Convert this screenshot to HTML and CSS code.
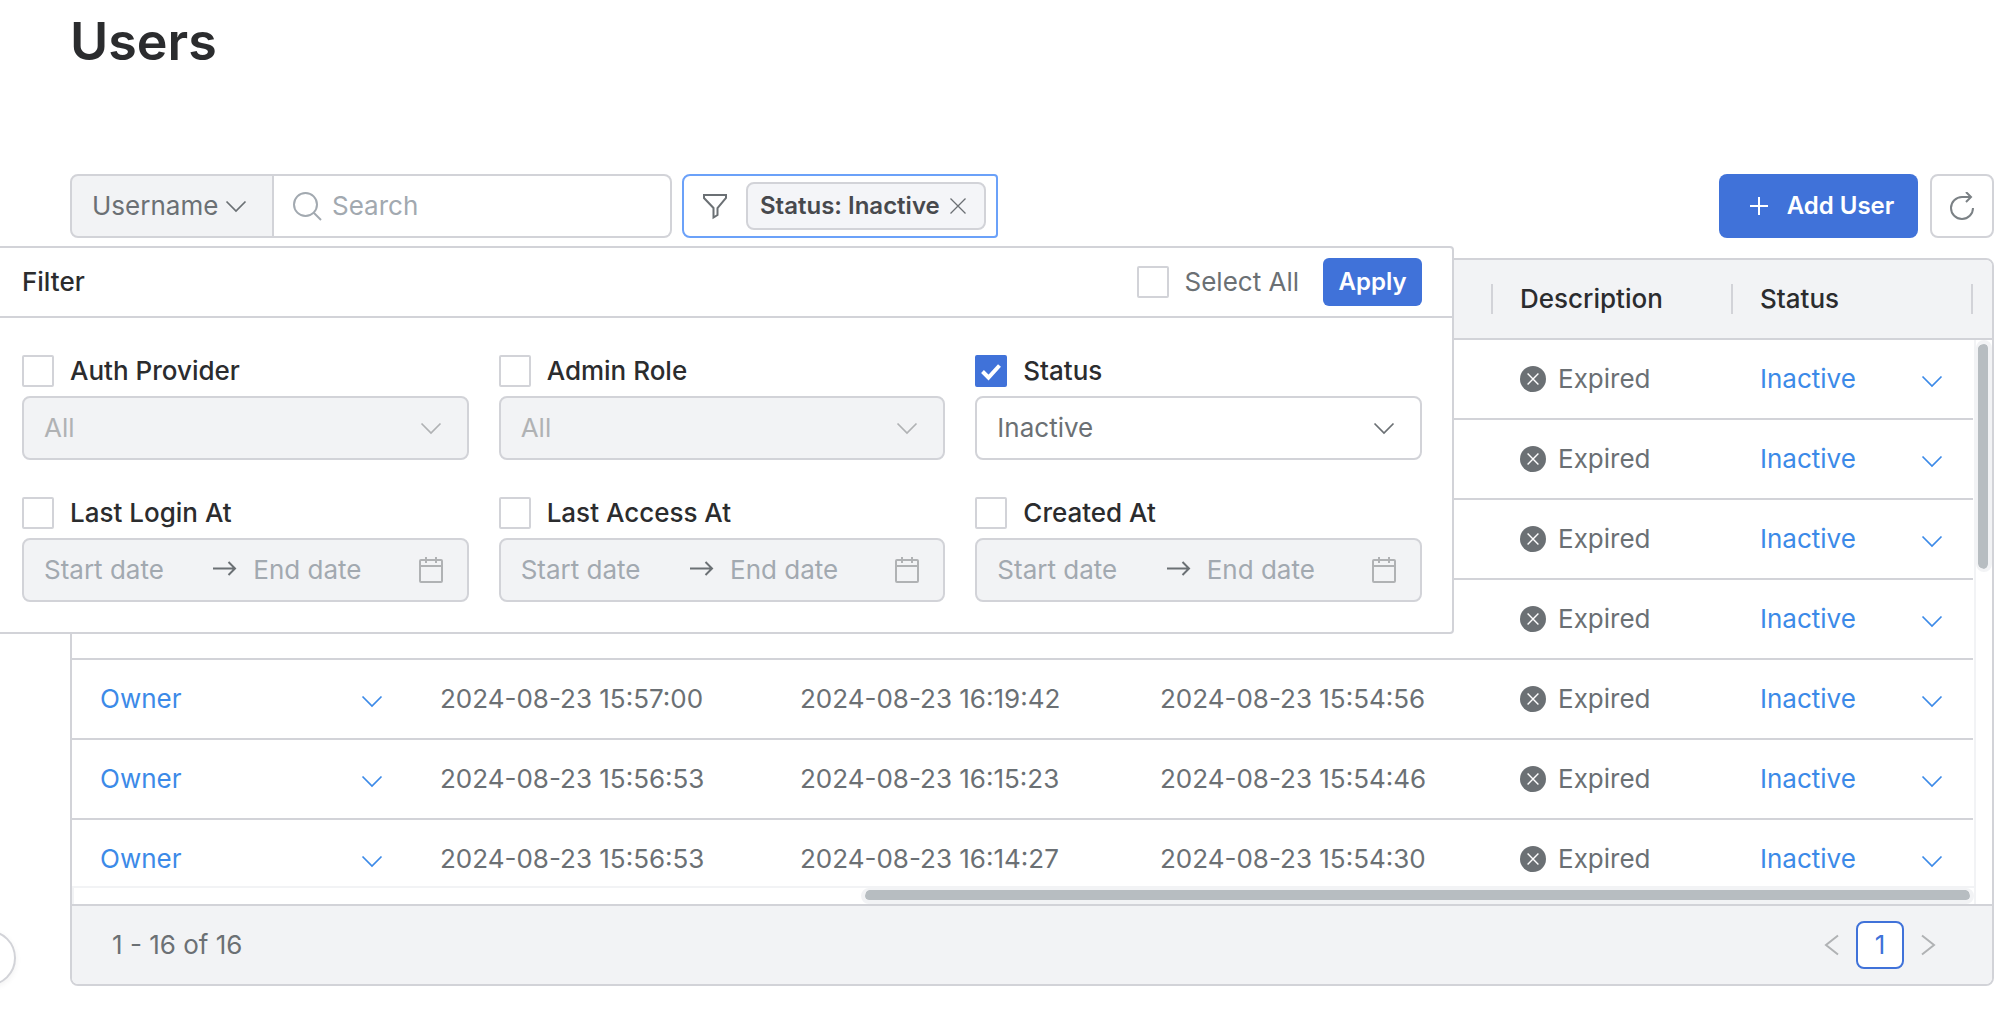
FILE: index.html
```html
<!DOCTYPE html>
<html lang="en">
<head>
<meta charset="utf-8">
<meta name="viewport" content="width=device-width, initial-scale=1">
<title>Users</title>
<link rel="stylesheet" href="styles.css">
</head>
<body>
<svg class="sprite" aria-hidden="true">
  <symbol id="chevron" viewBox="0 0 28 28"><path d="M4.500 9.500 14 19l9.500-9.500"/></symbol>
  <symbol id="arrow" viewBox="0 0 28 28"><path d="M2 12.500h22M17.500 6l6.500 6.500-6.500 6.500"/></symbol>
  <symbol id="calendar" viewBox="0 0 28 28"><rect x="3" y="4" width="22" height="22" rx="1"/><path d="M3 10h22M9 1v6M19 1v6"/></symbol>
  <symbol id="expired" viewBox="0 0 24 24"><circle class="disc" cx="12" cy="12" r="12"/><path class="cross" d="M7 7l10 10M17 7 7 17"/></symbol>
</svg>
<main class="page">
  <h1 class="title">Users</h1>
  <div class="toolbar">
    <div class="search">
      <div class="select select-key">
        <select aria-label="Search by"><option>Username</option></select>
        <svg class="icon icon-chevron"><use href="#chevron"/></svg>
      </div>
      <label class="search-box">
        <svg class="icon icon-search" viewBox="0 0 30 30"><circle cx="13.500" cy="13.500" r="11.500"/><path d="M21.500 21.500 29 29"/></svg>
        <input type="search" placeholder="Search" aria-label="Search">
      </label>
    </div>
    <div class="filter-bar">
      <button class="bare" type="button" aria-label="Open filter"><svg class="icon" viewBox="0 0 28 28"><path d="M3 3h22v3l-8.500 10v7l-4 2.500V16L3 6z"/></svg></button>
      <span class="tag">Status: Inactive
        <button class="bare" type="button" aria-label="Remove filter"><svg class="icon icon-close" viewBox="0 0 20 20"><path d="M2.500 2.500l15 15M17.500 2.500l-15 15"/></svg></button>
      </span>
    </div>
    <button class="btn btn-add" type="button"><svg class="icon icon-plus" viewBox="0 0 20 20"><path d="M10 1v18M1 10h18"/></svg>Add User</button>
    <button class="btn-refresh" type="button" aria-label="Refresh"><svg class="icon" viewBox="0 0 28 28"><path d="M25 16A11 11 0 1 1 14 5h9M18 0l5 5-5 5"/></svg></button>

    <form class="panel">
      <div class="panel-head">
        <h2>Filter</h2>
        <label class="check check-all"><input type="checkbox">Select All</label>
        <button class="btn btn-apply" type="button">Apply</button>
      </div>
      <div class="panel-grid">
        <div class="field">
          <label class="check"><input type="checkbox">Auth Provider</label>
          <div class="select is-disabled"><select disabled aria-label="Auth Provider"><option>All</option></select><svg class="icon icon-chevron"><use href="#chevron"/></svg></div>
        </div>
        <div class="field">
          <label class="check"><input type="checkbox">Admin Role</label>
          <div class="select is-disabled"><select disabled aria-label="Admin Role"><option>All</option></select><svg class="icon icon-chevron"><use href="#chevron"/></svg></div>
        </div>
        <div class="field">
          <label class="check"><input type="checkbox" checked>Status</label>
          <div class="select"><select aria-label="Status"><option>Inactive</option></select><svg class="icon icon-chevron"><use href="#chevron"/></svg></div>
        </div>
        <div class="field">
          <label class="check"><input type="checkbox">Last Login At</label>
          <div class="range"><input type="text" disabled placeholder="Start date" aria-label="Last login start date"><svg class="icon icon-arrow"><use href="#arrow"/></svg><input type="text" disabled placeholder="End date" aria-label="Last login end date"><svg class="icon"><use href="#calendar"/></svg></div>
        </div>
        <div class="field">
          <label class="check"><input type="checkbox">Last Access At</label>
          <div class="range"><input type="text" disabled placeholder="Start date" aria-label="Last access start date"><svg class="icon icon-arrow"><use href="#arrow"/></svg><input type="text" disabled placeholder="End date" aria-label="Last access end date"><svg class="icon"><use href="#calendar"/></svg></div>
        </div>
        <div class="field">
          <label class="check"><input type="checkbox">Created At</label>
          <div class="range"><input type="text" disabled placeholder="Start date" aria-label="Created start date"><svg class="icon icon-arrow"><use href="#arrow"/></svg><input type="text" disabled placeholder="End date" aria-label="Created end date"><svg class="icon"><use href="#calendar"/></svg></div>
        </div>
      </div>
    </form>
  </div>

  <section class="card">
    <div class="viewport">
      <table class="users">
        <colgroup><col><col class="col-date"><col class="col-date"><col class="col-date"><col class="col-state"><col class="col-state"><col class="col-scroll"></colgroup>
        <thead>
          <tr><th></th><th></th><th></th><th></th><th>Description</th><th>Status</th><td></td></tr>
        </thead>
        <tbody>
          <tr><td></td><td></td><td></td><td></td><td><span class="state"><svg class="icon"><use href="#expired"/></svg>Expired</span></td><td><div class="cell-select"><select aria-label="User status"><option>Inactive</option></select><svg class="icon icon-chevron"><use href="#chevron"/></svg></div></td><td></td></tr>
          <tr><td></td><td></td><td></td><td></td><td><span class="state"><svg class="icon"><use href="#expired"/></svg>Expired</span></td><td><div class="cell-select"><select aria-label="User status"><option>Inactive</option></select><svg class="icon icon-chevron"><use href="#chevron"/></svg></div></td><td></td></tr>
          <tr><td></td><td></td><td></td><td></td><td><span class="state"><svg class="icon"><use href="#expired"/></svg>Expired</span></td><td><div class="cell-select"><select aria-label="User status"><option>Inactive</option></select><svg class="icon icon-chevron"><use href="#chevron"/></svg></div></td><td></td></tr>
          <tr><td></td><td></td><td></td><td></td><td><span class="state"><svg class="icon"><use href="#expired"/></svg>Expired</span></td><td><div class="cell-select"><select aria-label="User status"><option>Inactive</option></select><svg class="icon icon-chevron"><use href="#chevron"/></svg></div></td><td></td></tr>
          <tr><td><div class="cell-select"><select aria-label="Admin role"><option>Owner</option></select><svg class="icon icon-chevron"><use href="#chevron"/></svg></div></td><td>2024-08-23 15:57:00</td><td>2024-08-23 16:19:42</td><td>2024-08-23 15:54:56</td><td><span class="state"><svg class="icon"><use href="#expired"/></svg>Expired</span></td><td><div class="cell-select"><select aria-label="User status"><option>Inactive</option></select><svg class="icon icon-chevron"><use href="#chevron"/></svg></div></td><td></td></tr>
          <tr><td><div class="cell-select"><select aria-label="Admin role"><option>Owner</option></select><svg class="icon icon-chevron"><use href="#chevron"/></svg></div></td><td>2024-08-23 15:56:53</td><td>2024-08-23 16:15:23</td><td>2024-08-23 15:54:46</td><td><span class="state"><svg class="icon"><use href="#expired"/></svg>Expired</span></td><td><div class="cell-select"><select aria-label="User status"><option>Inactive</option></select><svg class="icon icon-chevron"><use href="#chevron"/></svg></div></td><td></td></tr>
          <tr><td><div class="cell-select"><select aria-label="Admin role"><option>Owner</option></select><svg class="icon icon-chevron"><use href="#chevron"/></svg></div></td><td>2024-08-23 15:56:53</td><td>2024-08-23 16:14:27</td><td>2024-08-23 15:54:30</td><td><span class="state"><svg class="icon"><use href="#expired"/></svg>Expired</span></td><td><div class="cell-select"><select aria-label="User status"><option>Inactive</option></select><svg class="icon icon-chevron"><use href="#chevron"/></svg></div></td><td></td></tr>
        </tbody>
      </table>
      <div class="scroll scroll-y"><div class="thumb"></div></div>
      <div class="scroll scroll-x"><div class="thumb"></div></div>
    </div>
    <footer class="card-foot">
      <span>1 - 16 of 16</span>
      <nav class="pager" aria-label="Pages">
        <button class="bare" type="button" disabled aria-label="Previous page"><svg class="icon" viewBox="0 0 28 28"><path d="M20 4.500 8 14l12 9.500"/></svg></button>
        <button class="page-no" type="button" aria-current="page">1</button>
        <button class="bare" type="button" disabled aria-label="Next page"><svg class="icon" viewBox="0 0 28 28"><path d="M8 4.500 20 14 8 23.500"/></svg></button>
      </nav>
    </footer>
  </section>
</main>
<button class="sider-toggle" type="button" aria-label="Toggle sidebar"></button>
</body>
</html>
```
FILE: styles.css
```css
:root {
  --line: #d2d3d8;
  --soft: #f2f3f5;
  --text: #6b7074;
  --dark: #2b2c2e;
  --muted: #a2a9b0;
  --off: #b0b2b4;
  --blue: #4072d9;
  --link: #3c8ae8;
}
* { box-sizing: border-box; }
body {
  margin: 0;
  min-height: 100vh;
  overflow: hidden;
  background: #fff;
  color: var(--text);
  font: 400 26px/32px Inter, "Liberation Sans", sans-serif;
}
button, input, select {
  margin: 0;
  padding: 0;
  border: 0;
  background: none;
  color: inherit;
  font: inherit;
}
button, select { cursor: pointer; }
input { min-width: 0; outline: 0; }
select { appearance: none; opacity: 1; outline: 0; }
::placeholder { color: var(--muted); opacity: 1; }
.sprite { display: none; }
.icon {
  flex: none;
  display: block;
  width: 28px;
  height: 28px;
  fill: none;
  stroke: currentColor;
  stroke-width: 2;
}
.icon-chevron { stroke-width: 1.7; }
.bare { display: flex; }

.page { padding: 10px 22px 34px 70px; }
.title {
  margin: 0 0 100px;
  color: var(--dark);
  font-size: 52px;
  font-weight: 600;
  line-height: 64px;
}

/* Toolbar */
.toolbar { position: relative; display: flex; margin-bottom: 20px; }
.search { display: flex; width: 602px; }
.search-box {
  flex: 1;
  min-width: 0;
  display: flex;
  align-items: center;
  gap: 10px;
  height: 64px;
  padding: 0 18px;
  border: 2px solid var(--line);
  border-left: 0;
  border-radius: 0 8px 8px 0;
}
.search-box input { flex: 1; }
.icon-search { width: 30px; height: 30px; color: var(--muted); }
.filter-bar {
  display: flex;
  align-items: center;
  gap: 17px;
  height: 64px;
  margin-left: 10px;
  padding: 0 10px 0 17px;
  border: 2px solid #6ba1f9;
  border-radius: 8px 4px 4px 8px;
}
.tag {
  display: flex;
  align-items: center;
  gap: 8px;
  height: 48px;
  padding: 0 16px 0 12px;
  border: 2px solid var(--line);
  border-radius: 8px;
  background: #f4f5f8;
  color: #47494d;
  font-size: 24px;
  font-weight: 600;
  white-space: nowrap;
}
.icon-close { width: 20px; height: 20px; color: var(--text); stroke-width: 1.300; }
.btn {
  display: flex;
  align-items: center;
  justify-content: center;
  border-radius: 8px;
  background: var(--blue);
  color: #fff;
  font-size: 24px;
  font-weight: 600;
}
.btn-add { gap: 18px; width: 199px; height: 64px; margin-left: auto; padding-left: 6px; }
.icon-plus { width: 20px; height: 20px; }
.btn-refresh {
  display: grid;
  place-items: center;
  width: 64px;
  height: 64px;
  margin-left: 12px;
  border: 2px solid var(--line);
  border-radius: 8px;
  color: #7b8185;
}

/* Selects: the arrow shares the grid cell with the control */
.select, .cell-select { display: grid; align-items: center; }
.select > *, .cell-select > * { grid-area: 1 / 1; }
.select .icon, .cell-select .icon { justify-self: end; pointer-events: none; }
.select {
  height: 64px;
  border: 2px solid var(--line);
  border-radius: 8px;
  background: #fff;
}
.select select { width: 100%; height: 60px; padding: 0 20px; }
.select .icon { margin-right: 22px; }
.select-key { flex: none; width: 204px; border-radius: 8px 0 0 8px; background: var(--soft); }
.is-disabled { background: var(--soft); color: var(--off); }

/* Filter panel */
.panel {
  position: absolute;
  z-index: 2;
  top: 72px;
  left: -80px;
  width: 1464px;
  border: 2px solid var(--line);
  border-radius: 4px;
  background: #fff;
}
.panel-head {
  display: flex;
  align-items: center;
  gap: 24px;
  height: 70px;
  padding: 0 30px;
  border-bottom: 2px solid var(--line);
}
.panel-head h2 {
  flex: 1;
  margin: 0;
  color: var(--dark);
  font-size: 26px;
  font-weight: 500;
}
.btn-apply { width: 99px; height: 48px; border-radius: 6px; }
.panel-grid {
  display: grid;
  grid-template-columns: repeat(3, minmax(0, 1fr));
  gap: 36px 30px;
  padding: 36px 30px 30px;
}
.field { display: grid; grid-template-columns: minmax(0, 1fr); gap: 9px; }
.check {
  display: flex;
  align-items: center;
  gap: 16px;
  height: 33px;
  color: var(--dark);
  font-weight: 500;
}
.check-all { color: var(--text); font-weight: 400; }
.check input {
  appearance: none;
  width: 32px;
  height: 32px;
  border: 2px solid var(--line);
  border-radius: 2px;
  background: #fff;
}
.check input:checked {
  border-color: var(--blue);
  background: var(--blue) url("data:image/svg+xml,%3Csvg xmlns='http://www.w3.org/2000/svg' viewBox='0 0 28 28'%3E%3Cpath d='M5.500 14.500l6 6 11-12' fill='none' stroke='%23fff' stroke-width='4'/%3E%3C/svg%3E");
}
.range {
  display: flex;
  align-items: center;
  height: 64px;
  padding: 0 22px 0 20px;
  border: 2px solid var(--line);
  border-radius: 8px;
  background: var(--soft);
  color: var(--off);
}
.range input { flex: 1; }
.icon-arrow { margin: 0 14px 0 4px; color: var(--text); }

/* Table card */
.card {
  overflow: hidden;
  border: 2px solid var(--line);
  border-radius: 8px;
}
.viewport { position: relative; height: 644px; overflow: hidden; }
.users {
  width: 100%;
  table-layout: fixed;
  border-spacing: 0;
}
.col-date { width: 360px; }
.col-state { width: 240px; }
.col-scroll { width: 19px; }
.users th, .users td {
  height: 80px;
  padding: 0 27px;
  border-bottom: 2px solid var(--line);
  text-align: left;
  white-space: nowrap;
}
.users td:first-child { padding-left: 28px; }
.users td:last-child { padding: 0; }
.users tbody td:last-child { border-bottom: 0; }
.users thead td { background: var(--soft); }
.users th {
  background: linear-gradient(var(--line), var(--line)) right 24px / 2px 30px no-repeat var(--soft);
  color: var(--dark);
  font-weight: 500;
}
.cell-select { color: var(--link); }
.cell-select select { width: 100%; height: 32px; }
.cell-select .icon { margin-top: 4px; }
.state { display: flex; align-items: center; gap: 12px; }
.state .icon { width: 26px; height: 26px; stroke: none; }
.disc { fill: var(--text); }
.cross { stroke: #fff; stroke-width: 1.300; }

.scroll { position: absolute; background: #fff; }
.thumb { background: #b7bdc1; border: solid var(--soft); background-clip: padding-box; }
.scroll-y { top: 80px; right: 0; bottom: 0; width: 18px; border-left: 2px solid var(--soft); }
.scroll-y .thumb { height: 232px; border-width: 4px 4px 3px 2px; border-radius: 8px; }
.scroll-x { right: 18px; bottom: 0; left: 0; height: 18px; border: solid var(--soft); border-width: 2px 0 0 2px; }
.scroll-x .thumb { width: 1113px; height: 16px; margin-left: auto; border-width: 2px 4px 4px; border-radius: 8px; }

.card-foot {
  display: flex;
  align-items: center;
  justify-content: space-between;
  height: 80px;
  padding: 0 50px 0 40px;
  border-top: 2px solid var(--line);
  background: var(--soft);
}
.pager { display: flex; align-items: center; gap: 10px; color: var(--off); }
.page-no {
  width: 48px;
  height: 48px;
  border: 2px solid var(--blue);
  border-radius: 8px;
  background: #fff;
  color: var(--blue);
}

.sider-toggle {
  position: fixed;
  bottom: 34px;
  left: -40px;
  width: 56px;
  height: 56px;
  border: 2px solid var(--line);
  border-radius: 50%;
  background: #fff;
  box-shadow: 0 2px 6px #0000000f;
}
```
